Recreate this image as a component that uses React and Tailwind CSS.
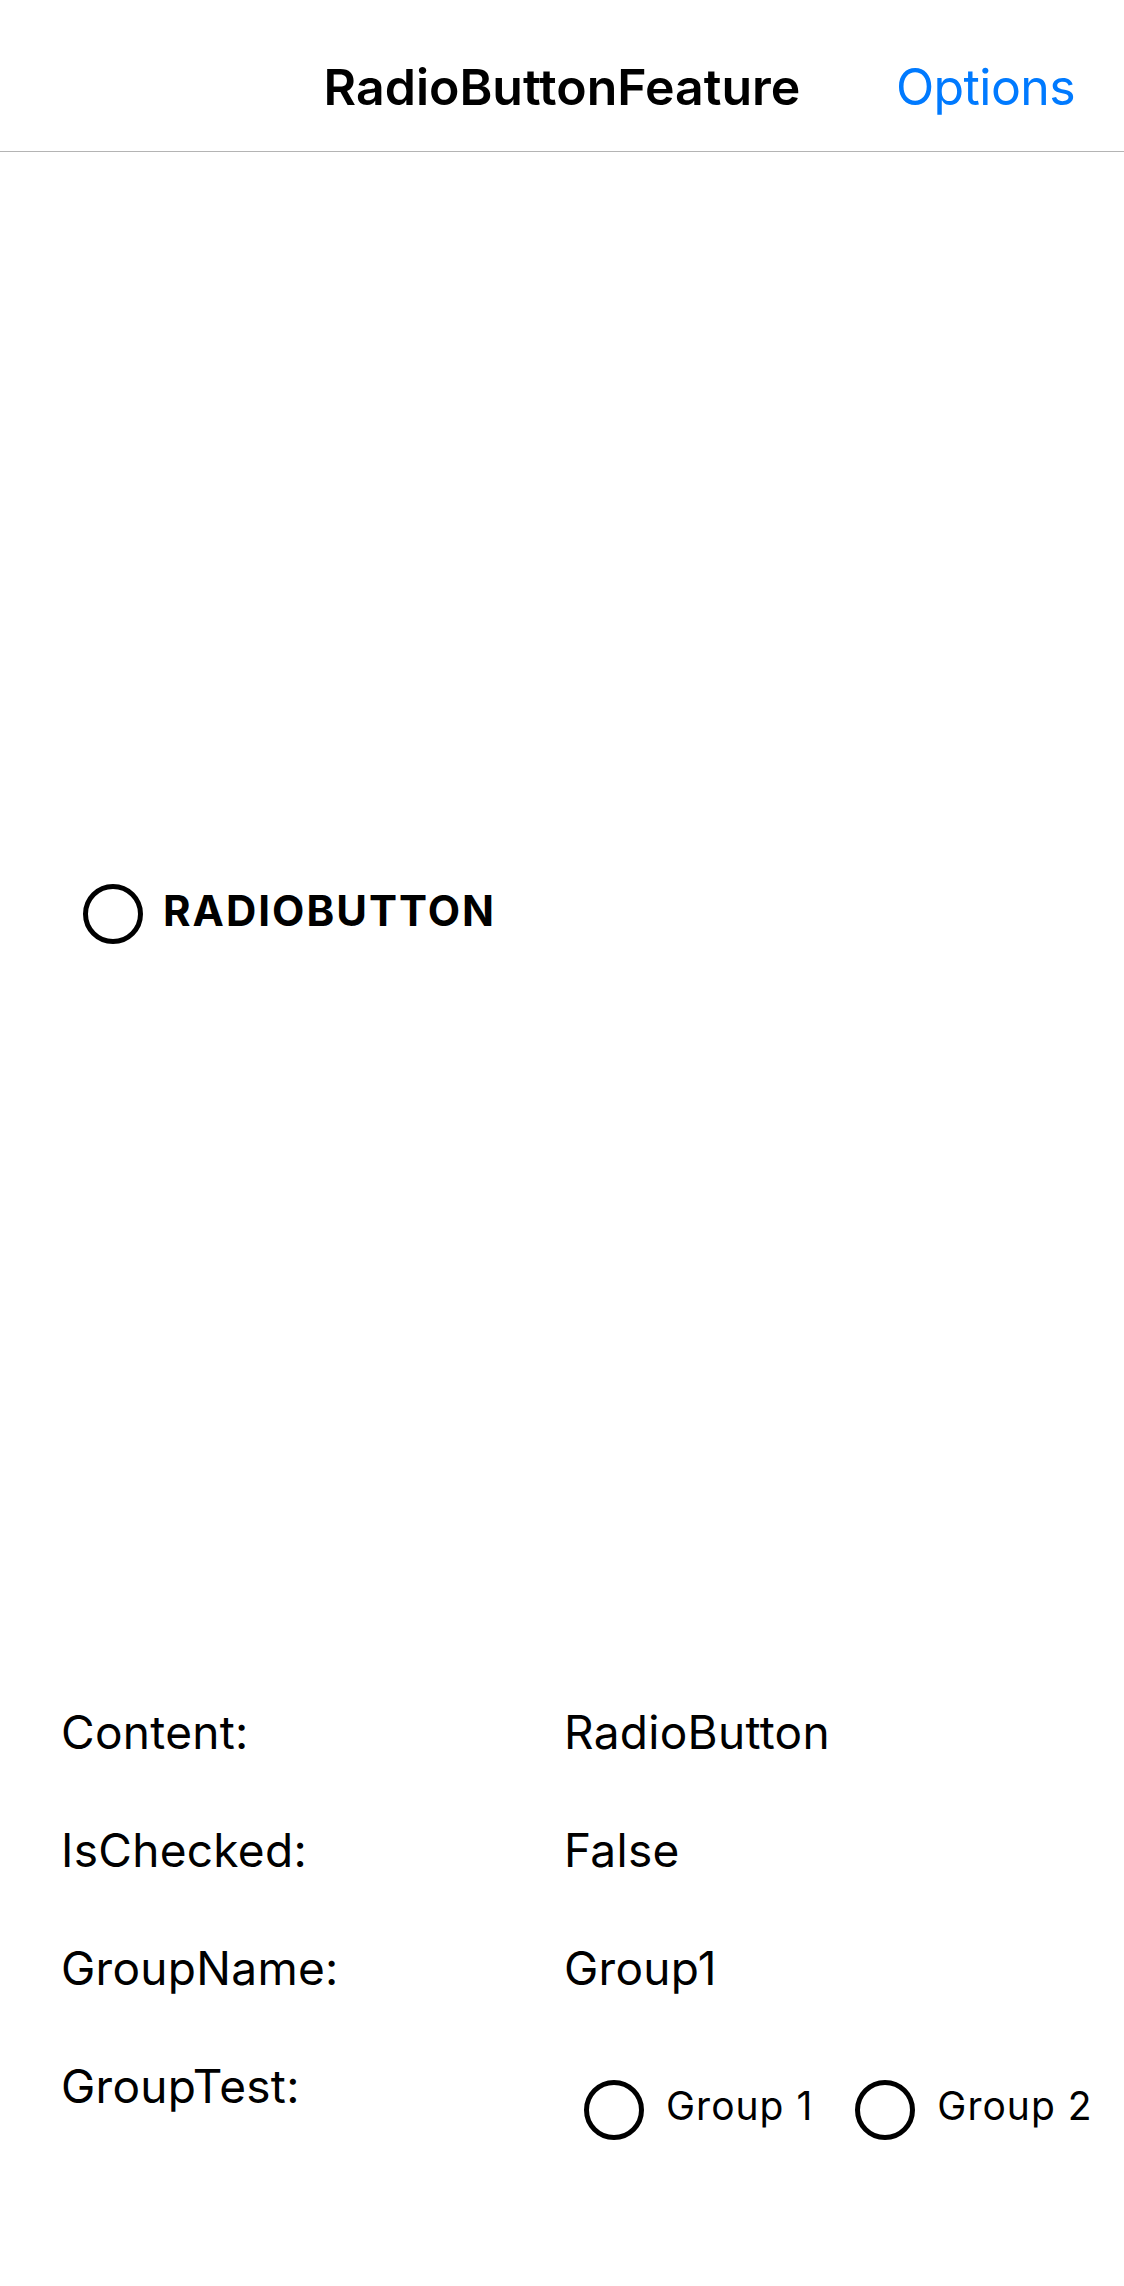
import React from 'react';

const font = { fontFamily: 'Inter, "Liberation Sans", sans-serif' };

const Radio = ({ className = '' }) => (
  <span className={`block h-[60px] w-[60px] shrink-0 rounded-full border-[5px] border-black bg-white ${className}`} />
);

const rows = [
  { label: 'Content:', value: 'RadioButton' },
  { label: 'IsChecked:', value: 'False' },
  { label: 'GroupName:', value: 'Group1' },
];

export default function App() {
  return (
    <div className="min-h-[2286px] w-[1124px] bg-white text-black" style={font}>
      {/* nav bar */}
      <header className="grid h-[152px] grid-cols-[1fr_auto_1fr] items-start border-b border-[#b4b4b4] pt-[57px]">
        <div />
        <h1 className="text-[50px] font-semibold leading-[60px] tracking-[0px]">RadioButtonFeature</h1>
        <button className="justify-self-end pr-[49px] text-[50px] leading-[60px] tracking-[-0.6px] text-[#007aff]">
          Options
        </button>
      </header>

      {/* sample */}
      <section className="flex items-center gap-[20px] pl-[83px] pt-[732px]">
        <Radio />
        <span className="mb-[6px] text-[42px] font-bold leading-[50px] tracking-[2px]">RADIOBUTTON</span>
      </section>

      {/* properties */}
      <section className="flex flex-col gap-[62px] pl-[61px] pt-[760px]">
        {rows.map((r) => (
          <div key={r.label} className="grid h-[56px] grid-cols-[503px_1fr] text-[46px] leading-[56px] tracking-[0.3px]">
            <span>{r.label}</span>
            <span>{r.value}</span>
          </div>
        ))}
        <div className="grid grid-cols-[503px_1fr] text-[46px] leading-[56px] tracking-[0.3px]">
          <span>GroupTest:</span>
          <div className="flex items-center pl-[20px] pt-[22px]">
            <Radio />
            <span className="mb-[8px] ml-[22px] text-[39px] leading-[48px] tracking-[1px]">Group 1</span>
            <Radio className="ml-[42px]" />
            <span className="mb-[8px] ml-[22px] text-[39px] leading-[48px] tracking-[1px]">Group 2</span>
          </div>
        </div>
      </section>
    </div>
  );
}
